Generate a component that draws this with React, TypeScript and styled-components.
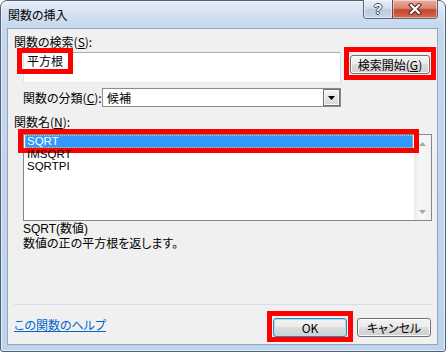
import React from 'react';
import styled, { createGlobalStyle } from 'styled-components';

const uiFont = `"Noto Sans CJK JP", "Liberation Sans", sans-serif`;
const latinFont = `"Liberation Sans", "Noto Sans CJK JP", sans-serif`;

const GlobalStyle = createGlobalStyle`
  html, body {
    margin: 0;
    padding: 0;
    background: #ffffff;
    overflow: hidden;
  }
  * {
    box-sizing: border-box;
  }
`;

const Window = styled.div`
  width: 446px;
  height: 352px;
  display: flex;
  flex-direction: column;
  padding: 0 7px 6px 6px;
  border: 1px solid #4f6179;
  border-radius: 7px 7px 3px 3px;
  background: linear-gradient(180deg, #e6eef8 0px, #d2e0f1 14px, #c5d7ed 28px, #bfd3eb 100%);
  box-shadow: inset 0 0 0 1px rgba(255, 255, 255, 0.55);
  font-family: ${uiFont};
  font-feature-settings: 'palt';
  font-size: 12px;
  color: #000;
`;

const TitleBar = styled.div`
  height: 27px;
  display: flex;
  justify-content: space-between;
  align-items: flex-start;
`;

const Title = styled.div`
  padding: 7px 0 0 1px;
  line-height: 14px;
  color: #000;
`;

const CaptionGroup = styled.div`
  display: flex;
  margin-top: -1px;
  height: 19px;
  border: 1px solid #56687f;
  border-top: none;
  border-radius: 0 0 4px 4px;
  overflow: hidden;
`;

const CaptionButton = styled.div<{ $close?: boolean }>`
  width: ${p => (p.$close ? 45 : 28)}px;
  height: 100%;
  display: flex;
  align-items: center;
  justify-content: center;
  border-left: ${p => (p.$close ? '1px solid #6b4a48' : 'none')};
  background: ${p =>
    p.$close
      ? 'linear-gradient(180deg, #eab0a2 0%, #d98571 45%, #c6472f 55%, #d76a50 100%)'
      : 'linear-gradient(180deg, #e9eff7 0%, #d3deeb 45%, #bccbdd 55%, #c9d6e6 100%)'};
  box-shadow: inset 0 0 0 1px rgba(255, 255, 255, 0.45);
`;

const HelpGlyph = styled.span`
  font-family: ${latinFont};
  font-weight: bold;
  font-size: 14px;
  line-height: 14px;
  color: #ffffff;
  text-shadow: 1px 0 0 #3d4d61, -1px 0 0 #3d4d61, 0 1px 0 #3d4d61, 0 -1px 0 #3d4d61;
`;

const Client = styled.div`
  flex: 1;
  display: flex;
  flex-direction: column;
  background: #f0f0f0;
  border: 1px solid #91a6bf;
  padding: 6px 5px 0 6px;
`;

const Label = styled.div<{ $indent?: number; $top?: number }>`
  line-height: 14px;
  margin-top: ${p => p.$top ?? 0}px;
  padding-left: ${p => p.$indent ?? 0}px;
  white-space: nowrap;
`;

const SearchRow = styled.div`
  display: flex;
  align-items: flex-start;
  margin-top: 3px;
  padding-left: 9px;
`;

const SearchBox = styled.div`
  width: 318px;
  height: 31px;
  background: #ffffff;
  border: 1px solid #abadb3;
  border-right-color: #dbdfe6;
  border-bottom-color: #e3e9ef;
  border-left-color: #e2e3ea;
  padding: 1px 3px;
  line-height: 14px;
`;

const Marked = styled.span`
  position: relative;
  display: inline-block;
`;

const Highlight = styled.span<{ $t: number; $r: number; $b: number; $l: number }>`
  position: absolute;
  top: ${p => -p.$t}px;
  right: ${p => -p.$r}px;
  bottom: ${p => -p.$b}px;
  left: ${p => -p.$l}px;
  border: 5px solid #ff0000;
  pointer-events: none;
`;

const PushButton = styled.button<{ $w: number; $default?: boolean }>`
  position: relative;
  flex: none;
  width: ${p => p.$w}px;
  height: 19px;
  padding: 0;
  border: 1px solid ${p => (p.$default ? '#3c7fb1' : '#707070')};
  border-radius: 3px;
  background: linear-gradient(180deg, #f2f2f2 0%, #ebebeb 49%, #dddddd 50%, #cfcfcf 100%);
  box-shadow: inset 0 0 0 1px ${p => (p.$default ? '#a3e3fb' : 'rgba(255, 255, 255, 0.85)')};
  font-family: ${uiFont};
  font-feature-settings: 'palt';
  font-size: 12px;
  line-height: 17px;
  color: #000;
`;

const SearchButton = styled(PushButton)`
  margin: 3px 0 0 9px;
`;

const CategoryRow = styled.div`
  display: flex;
  align-items: center;
  margin-top: 5px;
  padding-left: 9px;
`;

const CategoryLabel = styled.div`
  width: 79px;
  line-height: 19px;
  white-space: nowrap;
`;

const Select = styled.div`
  width: 239px;
  height: 19px;
  display: flex;
  background: #ffffff;
  border: 1px solid #8b8b8b;
`;

const SelectValue = styled.div`
  flex: 1;
  padding-left: 4px;
  line-height: 17px;
`;

const DropButton = styled.div`
  width: 17px;
  height: 17px;
  display: flex;
  align-items: center;
  justify-content: center;
  border: 1px solid #6f6f6f;
  background: linear-gradient(180deg, #f6f6f6 0%, #e6e6e6 50%, #d4d4d4 100%);
  box-shadow: inset 0 0 0 1px rgba(255, 255, 255, 0.8);
`;

const ListBox = styled.div`
  width: 409px;
  height: 87px;
  margin: 5px 0 0 9px;
  display: flex;
  background: #ffffff;
  border: 1px solid #828790;
`;

const ListItems = styled.div`
  flex: 1;
  display: flex;
  flex-direction: column;
`;

const ListItem = styled.div<{ $selected?: boolean }>`
  position: relative;
  height: 12.5px;
  margin: 0 1px;
  padding-left: 2px;
  font-family: ${latinFont};
  font-size: 11.5px;
  line-height: 12.5px;
  color: ${p => (p.$selected ? '#ffffff' : '#000000')};
  background: ${p => (p.$selected ? '#3399ff' : 'transparent')};
  outline: ${p => (p.$selected ? '1px dotted #e9b86c' : 'none')};
  outline-offset: -1px;
`;

const ScrollBar = styled.div`
  width: 17px;
  display: flex;
  flex-direction: column;
  justify-content: space-between;
  background: linear-gradient(90deg, #ececec 0%, #f7f7f7 40%, #f1f1f1 100%);
`;

const ScrollArrow = styled.div`
  height: 17px;
  display: flex;
  align-items: center;
  justify-content: center;
`;

const Description = styled.div`
  margin-top: 1px;
  padding-left: 9px;
  line-height: 15px;
  font-family: ${latinFont};
`;

const Spacer = styled.div`
  flex: 1;
`;

const Separator = styled.div`
  height: 1px;
  background: #d3dee9;
`;

const Footer = styled.div`
  display: flex;
  align-items: flex-start;
  justify-content: space-between;
  padding: 13px 0 7px;
`;

const HelpLink = styled.a`
  line-height: 14px;
  color: #0066cc;
  text-decoration: underline;
  cursor: pointer;
`;

const ButtonGroup = styled.div`
  display: flex;
  gap: 10px;
  margin-right: 1px;
`;

const Triangle: React.FC<{ up?: boolean; color: string; w: number; h: number }> = ({ up, color, w, h }) => (
  <svg width={w} height={h} viewBox={`0 0 ${w} ${h}`}>
    <polygon points={up ? `0,${h} ${w},${h} ${w / 2},0` : `0,0 ${w},0 ${w / 2},${h}`} fill={color} />
  </svg>
);

const CloseGlyph = () => (
  <svg width="14" height="12" viewBox="0 0 14 12">
    <path d="M3 2 L11 10 M11 2 L3 10" stroke="#4a2a26" strokeWidth="4.2" strokeLinecap="square" fill="none" />
    <path d="M3 2 L11 10 M11 2 L3 10" stroke="#ffffff" strokeWidth="2.2" strokeLinecap="square" fill="none" />
  </svg>
);

export default function App() {
  return (
    <>
      <GlobalStyle />
      <Window>
        <TitleBar>
          <Title>関数の挿入</Title>
          <CaptionGroup>
            <CaptionButton>
              <HelpGlyph>?</HelpGlyph>
            </CaptionButton>
            <CaptionButton $close>
              <CloseGlyph />
            </CaptionButton>
          </CaptionGroup>
        </TitleBar>

        <Client>
          <Label>関数の検索(<u>S</u>):</Label>
          <SearchRow>
            <SearchBox>
              <Marked>
                平方根
                <Highlight $t={6} $r={10} $b={6} $l={10} />
              </Marked>
            </SearchBox>
            <SearchButton $w={80}>
              検索開始(<u>G</u>)
              <Highlight $t={9} $r={7} $b={7} $l={7} />
            </SearchButton>
          </SearchRow>

          <CategoryRow>
            <CategoryLabel>関数の分類(<u>C</u>):</CategoryLabel>
            <Select>
              <SelectValue>候補</SelectValue>
              <DropButton>
                <Triangle color="#000000" w={7} h={4} />
              </DropButton>
            </Select>
          </CategoryRow>

          <Label $top={8}>関数名(<u>N</u>):</Label>
          <ListBox>
            <ListItems>
              <ListItem $selected>
                SQRT
                <Highlight $t={6} $r={6} $b={5} $l={7} />
              </ListItem>
              <ListItem>IMSQRT</ListItem>
              <ListItem>SQRTPI</ListItem>
            </ListItems>
            <ScrollBar>
              <ScrollArrow>
                <Triangle up color="#a6a6a6" w={7} h={4} />
              </ScrollArrow>
              <ScrollArrow>
                <Triangle color="#a6a6a6" w={7} h={4} />
              </ScrollArrow>
            </ScrollBar>
          </ListBox>

          <Description>
            <div>SQRT(数値)</div>
            <div>数値の正の平方根を返します。</div>
          </Description>

          <Spacer />
          <Separator />
          <Footer>
            <HelpLink>この関数のヘルプ</HelpLink>
            <ButtonGroup>
              <PushButton $w={74} $default>
                OK
                <Highlight $t={8} $r={7} $b={6} $l={7} />
              </PushButton>
              <PushButton $w={74}>キャンセル</PushButton>
            </ButtonGroup>
          </Footer>
        </Client>
      </Window>
    </>
  );
}
